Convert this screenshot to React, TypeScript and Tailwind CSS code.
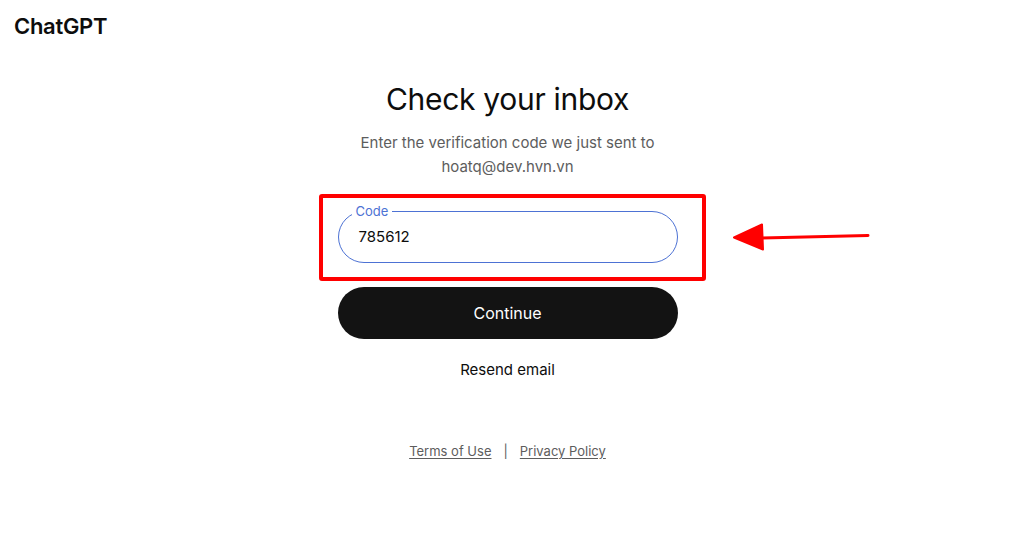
export default function App() {
  return (
    <div className="relative min-h-screen bg-white font-['Inter',sans-serif] text-[#0d0d0d]">
      <header className="px-[14px] pt-[13px] text-[22px] font-semibold leading-[26px] tracking-[-0.3px]">
        ChatGPT
      </header>

      <main className="flex flex-col items-center">
        <h1 className="mt-[42px] text-[30px] leading-9 font-normal tracking-[-0.3px]">Check your inbox</h1>
        <p className="mt-[14px] text-center text-[15px] leading-6 text-[#5d5d5d]">
          Enter the verification code we just sent to
          <br />
          hoatq@dev.hvn.vn
        </p>

        {/* code field, with the red annotation box round it */}
        <div className="relative mt-[32px] w-[340px]">
          <div className="pointer-events-none absolute -top-[17px] -right-[28px] -bottom-[18px] -left-[19px] rounded-[3px] border-4 border-[#f00]" />
          <div className="relative flex h-[52px] items-center rounded-full border border-[#4d72d4] pl-5">
            <span className="absolute -top-[9px] left-[13px] bg-white px-1 text-[13px] leading-4 text-[#4d72d4]">Code</span>
            <span className="text-[15px]">785612</span>
          </div>
        </div>

        <button className="mt-6 h-[52px] w-[340px] rounded-full bg-[#131313] text-[16px] font-normal text-white">
          Continue
        </button>

        <button className="mt-[19px] text-[15px] leading-6">Resend email</button>

        <footer className="mt-[59px] flex items-center gap-3 text-[13px] leading-5 text-[#5d5d5d]">
          <a className="underline underline-offset-2">Terms of Use</a>
          <span>|</span>
          <a className="underline underline-offset-2">Privacy Policy</a>
        </footer>
      </main>

      {/* annotation arrow */}
      <svg className="absolute left-[730px] top-[220px]" width="145" height="36" viewBox="0 0 145 36">
        <line x1="30" y1="18" x2="138" y2="15.5" stroke="#f00" strokeWidth="3" strokeLinecap="round" />
        <path d="M4 17.5 L32 4.5 L33 29.5 Z" fill="#f00" stroke="#f00" strokeWidth="2" strokeLinejoin="round" />
      </svg>
    </div>
  );
}
